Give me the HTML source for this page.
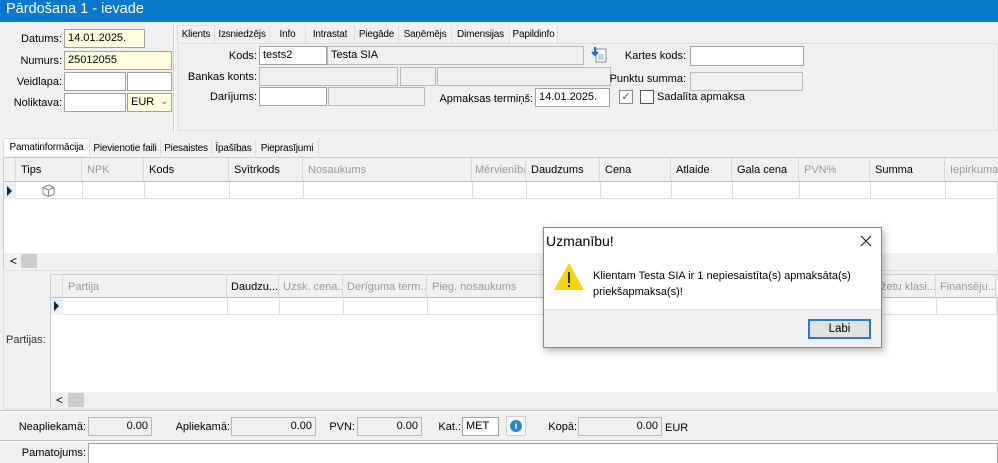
<!DOCTYPE html>
<html><head><meta charset="utf-8"><style>
*{box-sizing:border-box;margin:0;padding:0}
body{width:998px;height:463px;overflow:hidden;background:#f0f0f0;font-family:"Liberation Sans",sans-serif;font-size:11px;color:#000;position:relative}
.a{position:absolute}
.in{position:absolute;background:#fff;border:1px solid #a0a0a0;height:19px;padding:2px 3px;font-size:11px}
.g{background:#f0f0f0;border-color:#b8b8b8}
.y{background:#ffffe1}
.lb{position:absolute;text-align:right;font-size:11px}
.tab{position:absolute;height:17px;padding:3px 0 2px;font-size:10px;letter-spacing:-0.2px;border-right:1px solid #ddd;text-align:center;white-space:nowrap;overflow:hidden}
.hd{position:absolute;top:0;height:23px;border-right:1px solid #d8d8d8;padding:6px 5px;font-size:11px;white-space:nowrap;overflow:hidden}
.gr{color:#999}
.cl{position:absolute;border-right:1px solid #ddd}
</style></head><body>
<div class="a" style="left:0;top:0;width:998px;height:22px;background:#0a78cc;color:#fff;font-size:14.5px;padding:1px 6px">Pārdošana 1 - ievade</div>

<div class="lb" style="left:0;top:33px;width:62px">Datums:</div>
<div class="in y" style="left:64px;top:29px;width:81px">14.01.2025.</div>
<div class="lb" style="left:0;top:55px;width:62px">Numurs:</div>
<div class="in y" style="left:64px;top:51px;width:108px">25012055</div>
<div class="lb" style="left:0;top:76px;width:62px">Veidlapa:</div>
<div class="in" style="left:64px;top:72px;width:62px"></div>
<div class="in" style="left:127px;top:72px;width:45px"></div>
<div class="lb" style="left:0;top:97px;width:62px">Noliktava:</div>
<div class="in" style="left:64px;top:93px;width:62px"></div>
<div class="in y" style="left:127px;top:93px;width:45px">EUR <span style="float:right;color:#666;font-size:9px">⌄</span></div>
<div class="a" style="left:173px;top:25px;width:2px;height:108px;border-left:1px solid #ccc;border-right:1px solid #fff"></div>

<div class="a" style="left:177px;top:25px;width:821px;height:18px;background:#f0f0f0"></div>
<div class="tab" style="left:177px;top:25px;width:38px;background:#f0f0f0;border:1px solid #ddd;border-bottom:none;height:18px">Klients</div>
<div class="tab" style="left:215px;top:26px;width:55px">Izsniedzējs</div>
<div class="tab" style="left:270px;top:26px;width:36px">Info</div>
<div class="tab" style="left:306px;top:26px;width:49px">Intrastat</div>
<div class="tab" style="left:355px;top:26px;width:44px">Piegāde</div>
<div class="tab" style="left:399px;top:26px;width:53px">Saņēmējs</div>
<div class="tab" style="left:452px;top:26px;width:58px">Dimensijas</div>
<div class="tab" style="left:510px;top:26px;width:48px;background:#f5f5f5">Papildinfo</div>
<div class="a" style="left:178px;top:43px;width:820px;height:88px;background:#f0f0f0;border:1px solid #ddd"></div>

<div class="lb" style="left:180px;top:50px;width:77px">Kods:</div>
<div class="in" style="left:259px;top:46px;width:68px">tests2</div>
<div class="in g" style="left:327px;top:46px;width:257px">Testa SIA</div>
<svg class="a" style="left:591px;top:46px" width="17" height="17" viewBox="0 0 17 17"><rect x="5" y="3" width="10" height="13" fill="#fff" stroke="#7a8a9a"/><path d="M7 9h6M7 11h6M7 13h6" stroke="#8aa"/><path d="M4 1v7M1 6l3 3 3-3" stroke="#1a6fc0" stroke-width="2" fill="none"/></svg>
<div class="lb" style="left:600px;top:50px;width:86px">Kartes kods:</div>
<div class="in" style="left:690px;top:46px;width:114px;height:20px"></div>
<div class="lb" style="left:180px;top:71px;width:77px">Bankas konts:</div>
<div class="in g" style="left:259px;top:67px;width:139px"></div>
<div class="in g" style="left:400px;top:67px;width:36px"></div>
<div class="in g" style="left:437px;top:67px;width:174px"></div>
<div class="lb" style="left:600px;top:73px;width:86px">Punktu summa:</div>
<div class="in g" style="left:690px;top:72px;width:113px"></div>
<div class="lb" style="left:180px;top:91px;width:77px">Darījums:</div>
<div class="in" style="left:259px;top:87px;width:68px"></div>
<div class="in g" style="left:328px;top:87px;width:97px"></div>
<div class="lb" style="left:430px;top:93px;width:103px">Apmaksas termiņš:</div>
<div class="in" style="left:535px;top:88px;width:75px">14.01.2025.</div>
<div class="a" style="left:619px;top:90px;width:14px;height:14px;border:1px solid #888;background:#fff;font-size:11px;line-height:12px;text-align:center;color:#555">✓</div>
<div class="a" style="left:640px;top:90px;width:14px;height:14px;border:1px solid #555;background:#fff"></div>
<div class="a" style="left:657px;top:91px">Sadalīta apmaksa</div>

<div class="tab" style="left:3px;top:138px;width:87px;background:#fff;border:1px solid #ddd;border-bottom:none;height:18px">Pamatinformācija</div>
<div class="tab" style="left:90px;top:140px;width:71px">Pievienotie faili</div>
<div class="tab" style="left:161px;top:140px;width:51px">Piesaistes</div>
<div class="tab" style="left:212px;top:140px;width:44px">Īpašības</div>
<div class="tab" style="left:256px;top:140px;width:63px">Pieprasījumi</div>

<div class="a" style="left:3px;top:157px;width:995px;height:112px;background:#fff;border:1px solid #ccc">
 <div class="a" style="left:0;top:0;width:995px;height:24px;background:#f0f0f0;border-bottom:1px solid #bbb"></div>
 <div class="hd" style="left:0;width:12px;padding:0"></div>
 <div class="hd" style="left:12px;width:66px;padding-left:5px">Tips</div>
 <div class="hd gr" style="left:78px;width:62px">NPK</div>
 <div class="hd" style="left:140px;width:85px">Kods</div>
 <div class="hd" style="left:225px;width:74px">Svītrkods</div>
 <div class="hd gr" style="left:299px;width:169px">Nosaukums</div>
 <div class="hd gr" style="left:468px;width:54px;padding-left:3px">Mērvienība</div>
 <div class="hd" style="left:522px;width:74px">Daudzums</div>
 <div class="hd" style="left:596px;width:71px">Cena</div>
 <div class="hd" style="left:667px;width:61px">Atlaide</div>
 <div class="hd" style="left:728px;width:67px">Gala cena</div>
 <div class="hd gr" style="left:795px;width:71px">PVN%</div>
 <div class="hd" style="left:866px;width:75px">Summa</div>
 <div class="hd gr" style="left:941px;width:60px">Iepirkuma s</div>
 <div class="a" style="left:0;top:24px;width:995px;height:17px;border-bottom:1px solid #ddd"></div>
 <div class="a" style="left:0;top:24px;width:12px;height:17px;background:#e8f0f8"></div>
 <div class="a" style="left:3px;top:28px;width:0;height:0;border-left:5px solid #123;border-top:5px solid transparent;border-bottom:5px solid transparent"></div>
 <div class="cl" style="left:78px;top:24px;height:17px"></div><div class="cl" style="left:140px;top:24px;height:17px"></div><div class="cl" style="left:225px;top:24px;height:17px"></div><div class="cl" style="left:299px;top:24px;height:17px"></div><div class="cl" style="left:468px;top:24px;height:17px"></div><div class="cl" style="left:522px;top:24px;height:17px"></div><div class="cl" style="left:596px;top:24px;height:17px"></div><div class="cl" style="left:667px;top:24px;height:17px"></div><div class="cl" style="left:728px;top:24px;height:17px"></div><div class="cl" style="left:795px;top:24px;height:17px"></div><div class="cl" style="left:866px;top:24px;height:17px"></div><div class="cl" style="left:941px;top:24px;height:17px"></div>
 <svg class="a" style="left:38px;top:26px" width="13" height="13" viewBox="0 0 13 13"><path d="M6.5 1L12 3.5V10L6.5 12.5L1 10V3.5Z M1 3.5L6.5 6L12 3.5 M6.5 6V12.5" fill="none" stroke="#888"/></svg>
 <div class="a" style="left:0;top:95px;width:995px;height:16px;background:#f0f0f0"></div>
 <div class="a" style="left:6px;top:96px;font-size:12px">&lt;</div>
 <div class="a" style="left:17px;top:96px;width:16px;height:14px;background:#cdcdcd"></div>
</div>

<div class="a" style="left:3px;top:270px;width:995px;height:139px;border:1px solid #ddd"></div>
<div class="a" style="left:6px;top:334px;color:#333">Partijas:</div>
<div class="a" style="left:50px;top:274px;width:948px;height:134px;background:#fff;border:1px solid #ccc">
 <div class="a" style="left:0;top:0;width:948px;height:23px;background:#f0f0f0;border-bottom:1px solid #bbb"></div>
 <div class="hd" style="left:0;width:12px;padding:0"></div>
 <div class="hd gr" style="left:12px;width:164px">Partija</div>
 <div class="hd" style="left:176px;width:52px;padding-left:4px">Daudzu...</div>
 <div class="hd gr" style="left:228px;width:64px;padding-left:4px">Uzsk. cena...</div>
 <div class="hd gr" style="left:292px;width:84px;padding-left:4px">Derīguma term...</div>
 <div class="hd gr" style="left:376px;width:120px">Pieg. nosaukums</div>
 <div class="hd gr" style="left:828px;width:57px;padding-left:2px">žetu klasi...</div>
 <div class="hd gr" style="left:885px;width:60px;padding-left:4px">Finansēju...</div>
 <div class="a" style="left:0;top:23px;width:948px;height:17px;border-bottom:1px solid #ddd"></div>
 <div class="a" style="left:0;top:23px;width:12px;height:17px;background:#e8f0f8"></div>
 <div class="a" style="left:3px;top:26px;width:0;height:0;border-left:5px solid #123;border-top:5px solid transparent;border-bottom:5px solid transparent"></div>
 <div class="cl" style="left:176px;top:23px;height:17px"></div><div class="cl" style="left:228px;top:23px;height:17px"></div><div class="cl" style="left:292px;top:23px;height:17px"></div><div class="cl" style="left:376px;top:23px;height:17px"></div><div class="cl" style="left:885px;top:23px;height:17px"></div><div class="cl" style="left:945px;top:23px;height:17px"></div>
 <div class="a" style="left:0;top:117px;width:948px;height:16px;background:#f0f0f0"></div>
 <div class="a" style="left:5px;top:118px;font-size:12px">&lt;</div>
 <div class="a" style="left:17px;top:118px;width:16px;height:14px;background:#cdcdcd"></div>
</div>

<div class="a" style="left:0;top:410px;width:998px;height:2px;border-top:1px solid #bbb;border-bottom:1px solid #fff"></div>
<div class="lb" style="left:0;top:421px;width:86px">Neapliekamā:</div>
<div class="in g" style="left:88px;top:417px;width:64px;text-align:right">0.00</div>
<div class="lb" style="left:150px;top:421px;width:80px">Apliekamā:</div>
<div class="in g" style="left:231px;top:417px;width:85px;text-align:right">0.00</div>
<div class="lb" style="left:320px;top:421px;width:35px">PVN:</div>
<div class="in g" style="left:357px;top:417px;width:65px;text-align:right">0.00</div>
<div class="lb" style="left:420px;top:421px;width:41px">Kat.:</div>
<div class="in" style="left:462px;top:417px;width:37px">MET</div>
<div class="a" style="left:506px;top:416px;width:20px;height:20px;border:1px solid #ccc;background:#f6f6f6"></div>
<div class="a" style="left:510px;top:420px;width:12px;height:12px;border-radius:50%;background:#2a86c8;color:#fff;font-size:9px;font-weight:bold;text-align:center;line-height:12px">i</div>
<div class="lb" style="left:540px;top:421px;width:37px">Kopā:</div>
<div class="in g" style="left:578px;top:417px;width:84px;text-align:right">0.00</div>
<div class="a" style="left:665px;top:422px">EUR</div>
<div class="a" style="left:0;top:440px;width:998px;height:2px;border-top:1px solid #bbb;border-bottom:1px solid #fff"></div>
<div class="lb" style="left:0;top:447px;width:86px">Pamatojums:</div>
<div class="in" style="left:88px;top:443px;width:910px;height:20px;border-bottom:none"></div>

<div class="a" style="left:543px;top:227px;width:339px;height:121px;background:#fff;border:1px solid #888;box-shadow:2px 3px 8px rgba(0,0,0,.3)">
 <div class="a" style="left:2px;top:5px;font-size:14px">Uzmanību!</div>
 <svg class="a" style="left:316px;top:7px" width="12" height="12"><path d="M1 1L11 11M11 1L1 11" stroke="#222" stroke-width="1.2"/></svg>
 <svg class="a" style="left:9px;top:33px" width="32" height="30"><path d="M16 2L31 29H1Z" fill="#f5d40f"/><path d="M16 11v11" stroke="#333" stroke-width="2"/><rect x="15" y="24" width="2" height="2" fill="#333"/></svg>
 <div class="a" style="left:49px;top:40px;font-size:11px;line-height:16px">Klientam Testa SIA ir 1 nepiesaistīta(s) apmaksāta(s)<br>priekšapmaksa(s)!</div>
 <div class="a" style="left:0;top:81px;width:337px;height:38px;background:#f0f0f0;border-top:1px solid #e0e0e0"></div>
 <div class="a" style="left:264px;top:91px;width:63px;height:20px;background:#e1e1e1;border:2px solid #2a7ac8;text-align:center;line-height:16px;font-size:11.5px">Labi</div>
</div>
</body></html>
